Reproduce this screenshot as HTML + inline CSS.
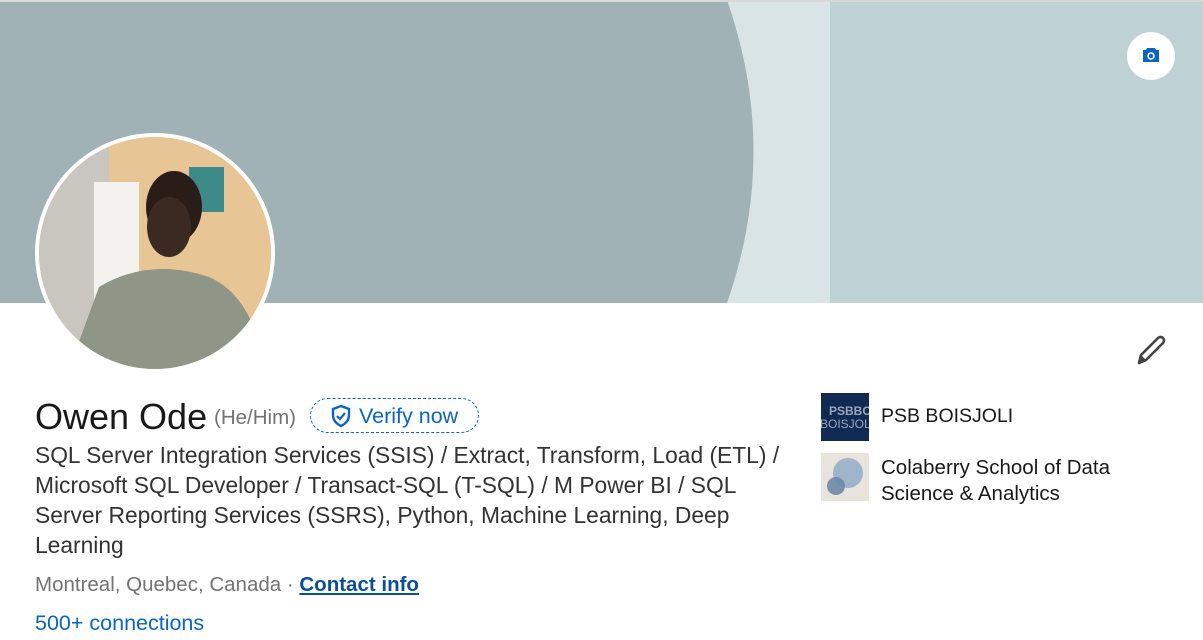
<!DOCTYPE html>
<html><head><meta charset="utf-8"><style>
*{margin:0;padding:0;box-sizing:border-box}
body{width:1203px;height:640px;background:#fff;font-family:"Liberation Sans",sans-serif;position:relative;overflow:hidden;color:#191919}
.abs{position:absolute;white-space:nowrap}
</style></head><body>
<svg class="abs" style="left:0;top:0" width="1203" height="303">
<rect width="1203" height="303" fill="#bed2d6"/>
<rect x="700" width="130" height="303" fill="#d9e4e6"/>
<path d="M0 0 H727 Q780 151 727 303 H0 Z" fill="#a0b2b6"/>
<rect width="1203" height="2" fill="#d8d8d8"/>
</svg>
<div class="abs" style="left:1127px;top:32px;width:48px;height:48px;border-radius:50%;background:#fff"></div>
<svg class="abs" style="left:1140px;top:44px" width="22" height="22" viewBox="0 0 22 22"><path d="M7 4h8l1 2h3v12H3V6h3z" fill="#0a66c2"/><circle cx="11" cy="12" r="3" fill="none" stroke="#fff" stroke-width="1.6"/></svg>
<div class="abs" style="left:35px;top:133px;width:240px;height:240px;border-radius:50%;background:#fff"></div>
<svg class="abs" style="left:39px;top:137px" width="232" height="232">
<defs><clipPath id="c"><circle cx="116" cy="116" r="116"/></clipPath></defs>
<g clip-path="url(#c)">
<rect width="232" height="232" fill="#e7c594"/>
<rect width="70" height="232" fill="#c9c6bf"/>
<rect x="55" y="45" width="45" height="187" fill="#f4f2ee"/>
<rect x="150" y="30" width="35" height="45" fill="#3d8a8a"/>
<ellipse cx="135" cy="70" rx="28" ry="36" fill="#2a1d17"/>
<ellipse cx="130" cy="90" rx="22" ry="30" fill="#3a2a22"/>
<path d="M30 232 L60 150 Q110 120 170 140 Q215 160 225 232Z" fill="#8f9587"/>
</g></svg>
<svg class="abs" style="left:1135px;top:335px" width="32" height="32" viewBox="0 0 32 32"><path d="M4 28 L6 20 L23 3 Q26 1 28 3 Q30 5 28 8 L11 25 Z" fill="none" stroke="#444" stroke-width="2.6" stroke-linejoin="round"/><path d="M4 28 L6 20 L11 25Z" fill="#444"/></svg>
<div class="abs" style="left:35px;top:396px;font-size:36px;line-height:42px;">Owen Ode</div>
<div class="abs" style="left:214px;top:406px;font-size:20.5px;color:#737373">(He/Him)</div>
<div class="abs" style="left:310px;top:398px;width:169px;height:35px;border:1px dashed #0a66c2;border-radius:18px"></div>
<svg class="abs" style="left:329px;top:404px" width="24" height="24" viewBox="0 0 24 24"><path d="M12 2 L20 5 V11 Q20 18 12 22 Q4 18 4 11 V5Z" fill="none" stroke="#0a66c2" stroke-width="2.4"/><path d="M8 12 L11 15 L16 9" fill="none" stroke="#0a66c2" stroke-width="2.2"/></svg>
<div class="abs" style="left:359px;top:404px;font-size:21.5px;color:#0a66c2">Verify now</div>
<div class="abs" style="left:35px;top:440px;width:765px;white-space:normal;font-size:22.8px;line-height:30px;color:#333">SQL Server Integration Services (SSIS) / Extract, Transform, Load (ETL) / Microsoft SQL Developer / Transact-SQL (T-SQL) / M Power BI / SQL Server Reporting Services (SSRS), Python, Machine Learning, Deep Learning</div>
<div class="abs" style="left:35px;top:573px;font-size:20.5px;color:#737373">Montreal, Quebec, Canada · <span style="color:#0a4f95;text-decoration:underline;font-weight:bold">Contact info</span></div>
<div class="abs" style="left:35px;top:611px;font-size:21.5px;color:#0a66c2">500+ connections</div>
<div class="abs" style="left:821px;top:393px;width:48px;height:48px;background:#102a53;color:#9aa6bb;font-size:12px;font-weight:bold;overflow:hidden;line-height:13px;padding:12px 0 0 8px;white-space:nowrap">PSBBO<br><span style="font-weight:normal;margin-left:-9px">BOISJOLI</span></div>
<div class="abs" style="left:881px;top:405px;font-size:19.5px">PSB BOISJOLI</div>
<svg class="abs" style="left:821px;top:453px" width="48" height="48"><rect width="48" height="48" fill="#e8e3dd"/><circle cx="27" cy="20" r="15" fill="#9fb5cc"/><circle cx="15" cy="33" r="9" fill="#6e88a6" opacity=".9"/></svg>
<div class="abs" style="left:881px;top:455px;font-size:20.5px;line-height:26px">Colaberry School of Data<br>Science &amp; Analytics</div>
</body></html>
